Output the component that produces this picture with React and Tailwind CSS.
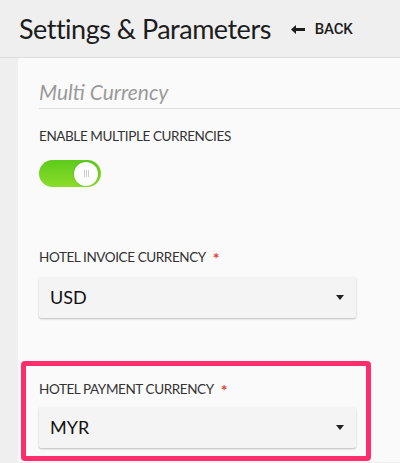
import React from "react";

function Caret() {
  return (
    <svg width="8" height="5" viewBox="0 0 8 5" className="shrink-0">
      <path d="M0 0 H8 L4 5 Z" fill="#222" />
    </svg>
  );
}

function Select({ value }) {
  return (
    <div className="flex h-[41px] w-[317px] items-center justify-between rounded-[2px] bg-[#f4f4f4] pl-[11px] pr-[12px] shadow-[0_1px_2px_rgba(0,0,0,0.25)]">
      <span className="text-[18px] text-[#111]">{value}</span>
      <Caret />
    </div>
  );
}

function Label({ children }) {
  return (
    <div className="flex items-center gap-[7px] text-[13.5px] leading-[18px] tracking-[-0.4px] text-[#333]">
      {children} <span className="mt-[2px] text-[16px] font-bold leading-none text-[#e53935]">*</span>
    </div>
  );
}

export default function App() {
  return (
    <div
      className="h-[463px] w-[400px] overflow-hidden bg-[#efefef]"
      style={{ fontFamily: 'Lato, "Liberation Sans", sans-serif' }}
    >
      <div className="flex h-[58px] items-center border-b border-[#dcdcdc] pl-[19px]">
        <h1 className="text-[27px] font-normal leading-none tracking-[-0.5px] text-[#1c1c1c]">
          Settings &amp; Parameters
        </h1>
        <div className="ml-[20px] mt-[2px] flex items-center gap-[10px] font-['Roboto'] text-[15px] font-medium tracking-[-0.2px] text-[#1c1c1c]">
          <svg width="14" height="9" viewBox="0 0 14 9">
            <path d="M0 4.5 L5 0 V3 H14 V6 H5 V9 Z" fill="#1c1c1c" />
          </svg>
          BACK
        </div>
      </div>
      <div className="ml-[18px] h-[404px] bg-[#fafafa] pl-[21px] pt-[21px]">
        <div className="border-b border-[#dedede] pb-[3px] text-[21px] italic leading-[26px] text-[#9a9a9a]">
          Multi Currency
        </div>
        <div className="mt-[18px] text-[13.5px] leading-[18px] tracking-[-0.4px] text-[#333]">ENABLE MULTIPLE CURRENCIES</div>
        <div className="mt-[15px] flex h-[27px] w-[62px] items-center justify-end rounded-full bg-gradient-to-b from-[#5ccb1c] to-[#8bdc2a] pr-[3px]">
          <div className="flex h-[24px] w-[24px] items-center justify-center gap-[1px] rounded-full bg-white shadow-[0_0_2px_rgba(0,0,0,0.2)]">
            <span className="h-[7px] w-px bg-[#ccc]" />
            <span className="h-[7px] w-px bg-[#ccc]" />
            <span className="h-[7px] w-px bg-[#ccc]" />
          </div>
        </div>
        <div className="mt-[61px]">
          <Label>HOTEL INVOICE CURRENCY</Label>
        </div>
        <div className="mt-[11px]">
          <Select value="USD" />
        </div>
        <div className="-ml-[18px] mt-[43px] w-[350px] rounded-[4px] border-[5px] border-[#ff2d6c] px-[13px] pb-[8px] pt-[14px]">
          <Label>HOTEL PAYMENT CURRENCY</Label>
          <div className="mt-[9px]">
            <Select value="MYR" />
          </div>
        </div>
      </div>
    </div>
  );
}
